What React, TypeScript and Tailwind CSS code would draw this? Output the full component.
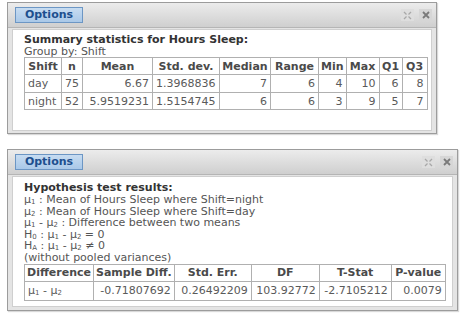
import React from "react";

const font = { fontFamily: '"DejaVu Sans", Verdana, sans-serif' };

function HeaderBar() {
  return (
    <div className="flex h-[25px] items-center justify-between bg-gradient-to-b from-[#ececec] to-[#cfcfcf] border-b border-[#b5b5b5]">
      <div className="ml-[7px] flex h-[16px] w-[68px] items-center justify-center border border-[#6c96c4] bg-gradient-to-b from-[#c7dcf1] to-[#a9c8e8] text-[11px] font-bold text-[#1d4f8e]">
        Options
      </div>
      <div className="mr-[4px] flex gap-[5px]">
        <div className="flex h-[12px] w-[13px] items-center justify-center bg-[#dedede]">
          <svg width="9" height="9" viewBox="0 0 9 9">
            <path d="M1 1 L3.5 3.5 M8 1 L5.5 3.5 M1 8 L3.5 5.5 M8 8 L5.5 5.5" stroke="#a8a8a8" strokeWidth="1.3" />
          </svg>
        </div>
        <div className="flex h-[12px] w-[13px] items-center justify-center bg-[#d6d6d6]">
          <svg width="8" height="8" viewBox="0 0 8 8">
            <path d="M1 1 L7 7 M7 1 L1 7" stroke="#7a7a7a" strokeWidth="1.8" />
          </svg>
        </div>
      </div>
    </div>
  );
}

type Col = { label: string; w: number; align?: "left" | "right" | "center" };

function Table({ cols, rows, rowH }: { cols: Col[]; rows: React.ReactNode[][]; rowH: number[] }) {
  return (
    <table className="border-collapse text-[11px]" style={{ tableLayout: "fixed" }}>
      <colgroup>
        {cols.map((c, i) => (
          <col key={i} style={{ width: c.w }} />
        ))}
      </colgroup>
      <thead>
        <tr style={{ height: rowH[0] }}>
          {cols.map((c, i) => (
            <th
              key={i}
              className="border border-[#b0b0b0] bg-white px-[2px] py-0 text-center font-bold text-[#4a4a4a] leading-none whitespace-nowrap"
            >
              {c.label}
            </th>
          ))}
        </tr>
      </thead>
      <tbody>
        {rows.map((r, ri) => (
          <tr key={ri} style={{ height: rowH[ri + 1] }}>
            {r.map((v, ci) => (
              <td
                key={ci}
                className={
                  "border border-[#b0b0b0] bg-white px-[3px] py-0 text-[#5a5a5a] leading-none whitespace-nowrap " +
                  (cols[ci].align === "left" ? "text-left" : cols[ci].align === "center" ? "text-center" : "text-right")
                }
              >
                {v}
              </td>
            ))}
          </tr>
        ))}
      </tbody>
    </table>
  );
}

function Mu({ n }: { n: string }) {
  return (
    <span>
      μ<span className="text-[7px] leading-none align-[-1px]">{n}</span>
    </span>
  );
}
function H({ n }: { n: string }) {
  return (
    <span>
      H<span className="text-[7px] leading-none align-[-1px]">{n}</span>
    </span>
  );
}

function Line({ children }: { children: React.ReactNode }) {
  return <div className="h-[11.6px] leading-[11.6px] whitespace-nowrap">{children}</div>;
}

export default function App() {
  const cols1: Col[] = [
    { label: "Shift", w: 37, align: "left" },
    { label: "n", w: 20, align: "left" },
    { label: "Mean", w: 70 },
    { label: "Std. dev.", w: 67, align: "left" },
    { label: "Median", w: 51 },
    { label: "Range", w: 48 },
    { label: "Min", w: 27 },
    { label: "Max", w: 33 },
    { label: "Q1", w: 23 },
    { label: "Q3", w: 25 },
  ];
  const rows1 = [
    ["day", "75", "6.67", "1.3968836", "7", "6", "4", "10", "6", "8"],
    ["night", "52", "5.9519231", "1.5154745", "6", "6", "3", "9", "5", "7"],
  ];
  const cols2: Col[] = [
    { label: "Difference", w: 69, align: "left" },
    { label: "Sample Diff.", w: 80 },
    { label: "Std. Err.", w: 77 },
    { label: "DF", w: 68 },
    { label: "T-Stat", w: 72 },
    { label: "P-value", w: 54 },
  ];
  const rows2 = [
    [
      <span key="d">
        <Mu n="1" /> - <Mu n="2" />
      </span>,
      "-0.71807692",
      "0.26492209",
      "103.92772",
      "-2.7105212",
      "0.0079",
    ],
  ];

  return (
    <div className="h-[318px] w-[467px] bg-white" style={font}>
      <div className="pl-[7px] pt-[2px]">
        <div className="flex h-[132px] w-[430px] flex-col border border-[#9c9c9c] bg-[#e4e4e4] shadow-[1px_1px_1px_rgba(0,0,0,0.15)]">
          <HeaderBar />
          <div className="mx-[4px] mb-[2px] mt-[1px] flex-1 border border-[#cfcfcf] bg-white pl-[11px] pt-[4px]">
            <div className="h-[12px] text-[11px] font-bold leading-[12px] text-[#333] whitespace-nowrap">
              Summary statistics for Hours Sleep:
            </div>
            <div className="h-[11px] text-[11px] leading-[11px] text-[#555]">Group by: Shift</div>
            <Table cols={cols1} rows={rows1} rowH={[17, 18, 17]} />
          </div>
        </div>

        <div className="mt-[15px] flex h-[162px] w-[451px] flex-col border border-[#9c9c9c] bg-[#e4e4e4] shadow-[1px_1px_1px_rgba(0,0,0,0.15)]">
          <HeaderBar />
          <div className="mx-[4px] mb-[3px] mt-[1px] flex-1 border border-[#cfcfcf] bg-white pl-[11px] pt-[5px]">
            <div className="h-[12px] text-[11px] font-bold leading-[12px] text-[#333]">Hypothesis test results:</div>
            <div className="text-[11px] text-[#555]">
              <Line>
                <Mu n="1" /> : Mean of Hours Sleep where Shift=night
              </Line>
              <Line>
                <Mu n="2" /> : Mean of Hours Sleep where Shift=day
              </Line>
              <Line>
                <Mu n="1" /> - <Mu n="2" /> : Difference between two means
              </Line>
              <Line>
                <H n="0" /> : <Mu n="1" /> - <Mu n="2" /> = 0
              </Line>
              <Line>
                <H n="A" /> : <Mu n="1" /> - <Mu n="2" /> ≠ 0
              </Line>
              <Line>(without pooled variances)</Line>
            </div>
            <Table cols={cols2} rows={rows2} rowH={[17, 19]} />
          </div>
        </div>
      </div>
    </div>
  );
}
